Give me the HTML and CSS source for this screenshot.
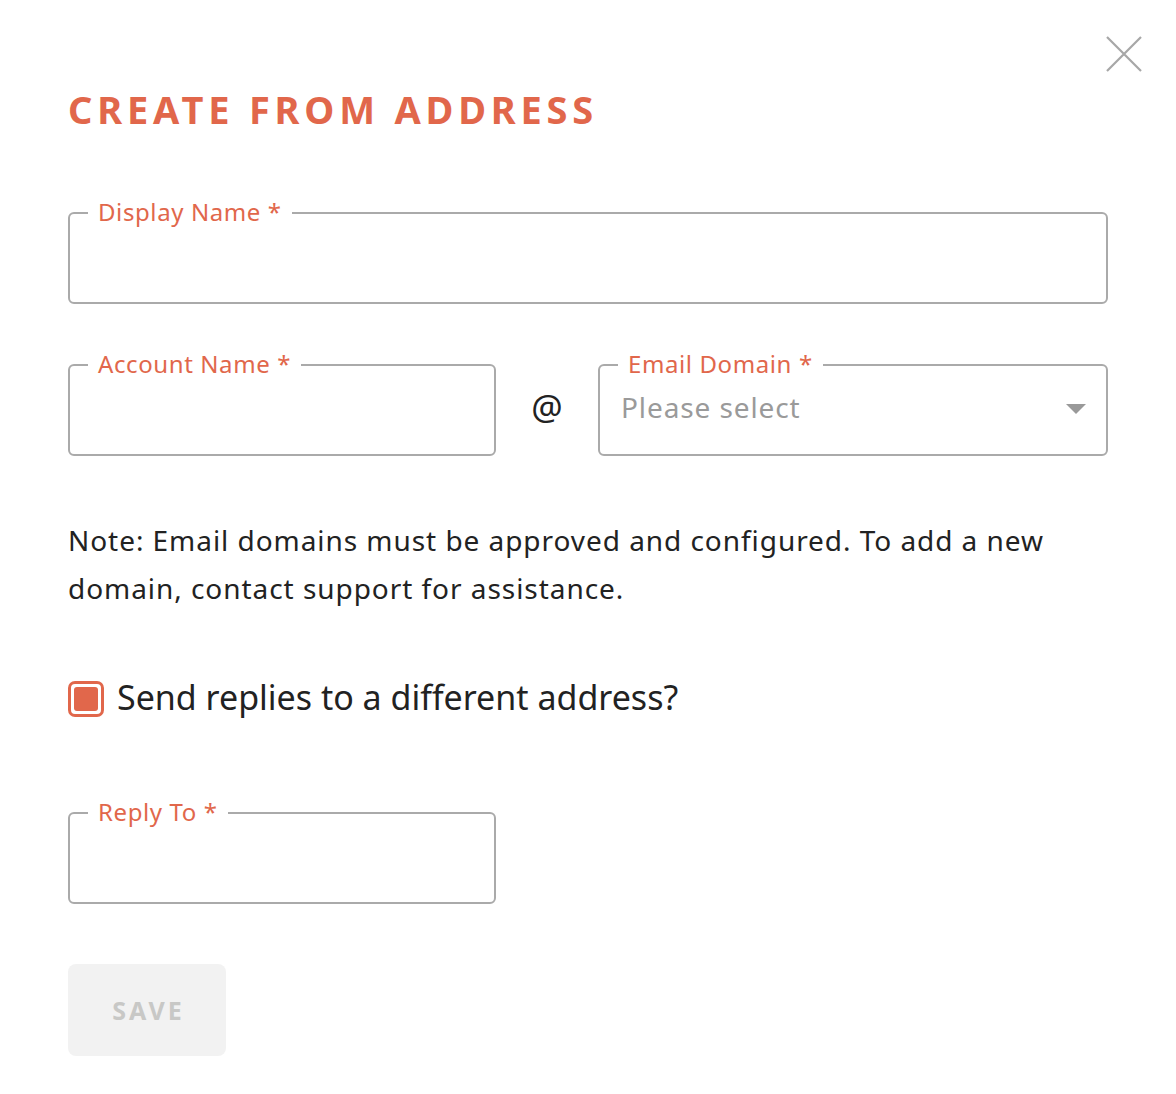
FILE: index.html
```html
<!DOCTYPE html>
<html lang="en">
<head>
<meta charset="utf-8">
<title>Create From Address</title>
<link rel="stylesheet" href="styles.css">
</head>
<body>
<div class="dialog">
  <button class="close" aria-label="Close">
    <svg width="36" height="36" viewBox="0 0 36 36"><path d="M1 1L35 35M35 1L1 35" stroke="#a7a7a7" stroke-width="2.2" fill="none"/></svg>
  </button>
  <h1 class="title">CREATE FROM ADDRESS</h1>

  <div class="field">
    <span class="field-label">Display Name *</span>
  </div>

  <div class="row">
    <div class="field">
      <span class="field-label">Account Name *</span>
    </div>
    <div class="at">@</div>
    <div class="field select">
      <span class="field-label">Email Domain *</span>
      <span class="placeholder">Please select</span>
      <span class="caret"></span>
    </div>
  </div>

  <p class="note">Note: Email domains must be approved and configured. To add a new domain, contact support for assistance.</p>

  <label class="check">
    <span class="box"><span class="fill"></span></span>
    <span class="check-text">Send replies to a different address?</span>
  </label>

  <div class="field half">
    <span class="field-label">Reply To *</span>
  </div>

  <button class="save">SAVE</button>
</div>
</body>
</html>
```

FILE: styles.css
```css
html, body {
  margin: 0;
  padding: 0;
  background: #fff;
}
body {
  font-family: "Noto Sans", "DejaVu Sans", sans-serif;
  color: #222;
}
.dialog {
  position: relative;
  width: 1176px;
  box-sizing: border-box;
  padding: 84px 68px 0 68px;
}
.close {
  position: absolute;
  top: 36px;
  left: 1106px;
  width: 36px;
  height: 36px;
  padding: 0;
  border: 0;
  background: none;
}
.close svg { display: block; }
.title {
  margin: 0 0 78px 0;
  font-size: 38px;
  line-height: 50px;
  font-weight: 700;
  letter-spacing: 4.8px;
  color: #e1674b;
}
.field {
  position: relative;
  height: 92px;
  box-sizing: border-box;
  border: 2px solid #aaaaaa;
  border-radius: 6px;
}
.field-label {
  position: absolute;
  top: -16px;
  left: 18px;
  padding: 0 10px;
  background: #fff;
  font-size: 24px;
  line-height: 28px;
  letter-spacing: 0.6px;
  color: #e1674b;
}
.row {
  display: grid;
  grid-template-columns: 428px 102px 1fr;
  margin-top: 60px;
}
.at {
  font-size: 35px;
  display: flex;
  align-items: center;
  justify-content: center;
  padding-bottom: 8px;
  color: #222;
}
.select {
  display: flex;
  align-items: center;
  padding: 0 20px 6px 21px;
}
.placeholder {
  flex: 1;
  font-size: 28px;
  letter-spacing: 0.9px;
  color: #9a9a9a;
}
.caret {
  width: 0;
  height: 0;
  margin-top: 4px;
  border-left: 10px solid transparent;
  border-right: 10px solid transparent;
  border-top: 10px solid #999;
}
.note {
  margin: 60px 0 0 0;
  font-size: 28px;
  line-height: 48px;
  letter-spacing: 0.95px;
  color: #222;
}
.check {
  display: flex;
  align-items: center;
  gap: 13px;
  margin-top: 67px;
  height: 40px;
}
.box {
  width: 36px;
  height: 36px;
  box-sizing: border-box;
  border: 3px solid #e1674b;
  border-radius: 7px;
  padding: 3px;
}
.fill {
  display: block;
  width: 100%;
  height: 100%;
  background: #e1674b;
  border-radius: 3px;
}
.check-text {
  font-size: 34px;
  line-height: 40px;
  padding-bottom: 4px;
  color: #222;
}
.half {
  width: 428px;
  margin-top: 93px;
}
.save {
  display: block;
  margin-top: 60px;
  width: 158px;
  height: 92px;
  padding: 0 0 0 3px;
  border: 0;
  border-radius: 8px;
  background: #f2f2f2;
  color: #c8c8c6;
  font-family: inherit;
  font-size: 25px;
  font-weight: 700;
  letter-spacing: 3px;
}
```
